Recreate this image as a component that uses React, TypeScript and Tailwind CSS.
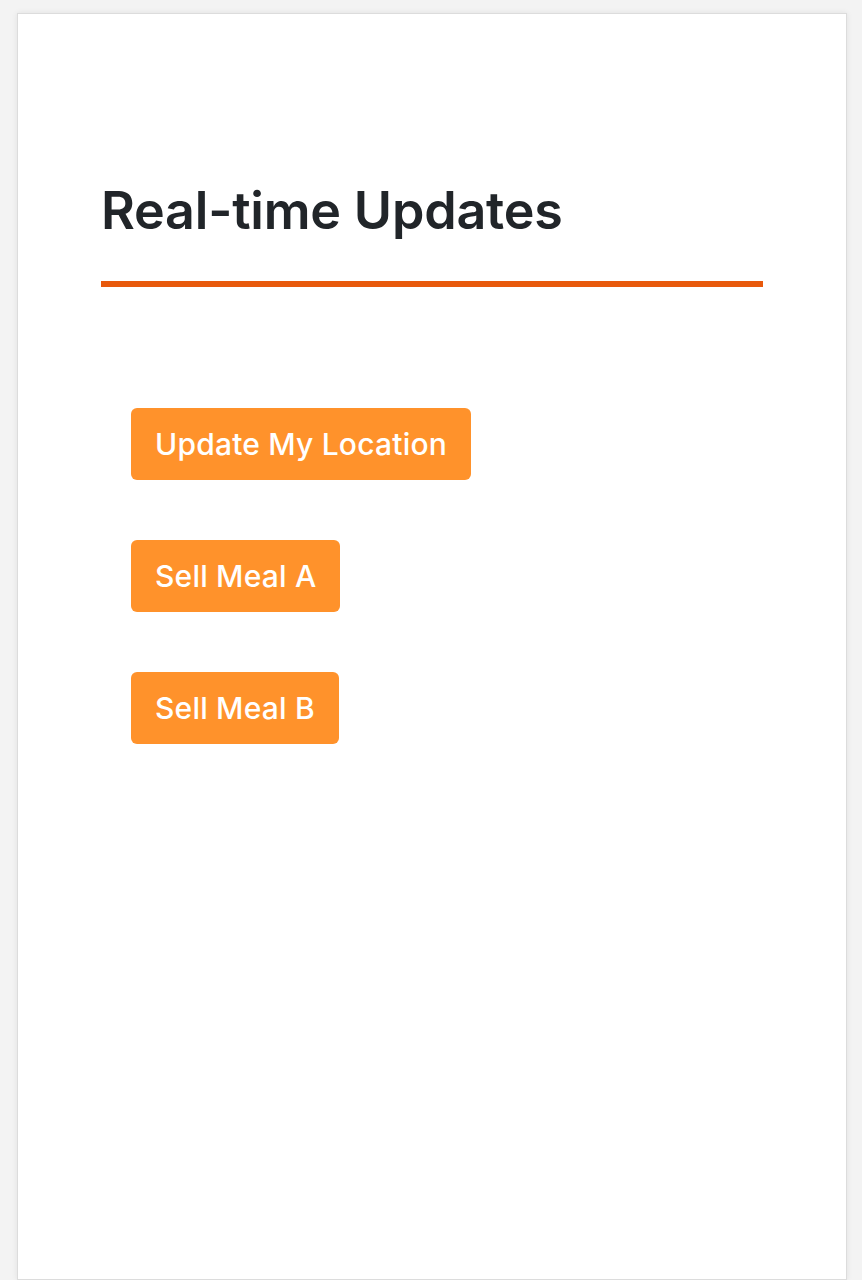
export default function App() {
  const buttons = ["Update My Location", "Sell Meal A", "Sell Meal B"];

  return (
    <div
      className="min-h-[1280px] bg-[#f3f3f3] pt-[13px] pl-[17px] pr-[15px]"
      style={{ fontFamily: "Inter, 'Noto Sans', sans-serif" }}
    >
      <div className="min-h-[1267px] bg-white border border-[#dcdcdc] shadow-[0_0_6px_rgba(0,0,0,0.08)] px-[83px] pt-[166px]">
        {/* Heading */}
        <h1 className="text-[52px] leading-[1.2] font-semibold text-[#212529] tracking-[-0.2px]">
          Real-time Updates
        </h1>
        <div className="mt-[39px] h-[6px] bg-[#e8590c]" />

        {/* Actions */}
        <div className="mt-[121px] pl-[30px] flex flex-col items-start gap-[60px]">
          {buttons.map((label) => (
            <button
              key={label}
              className="h-[72px] px-[24px] rounded-[6px] bg-[#ff922b] text-white text-[30px] font-medium tracking-[0.2px]"
            >
              {label}
            </button>
          ))}
        </div>
      </div>
    </div>
  );
}
